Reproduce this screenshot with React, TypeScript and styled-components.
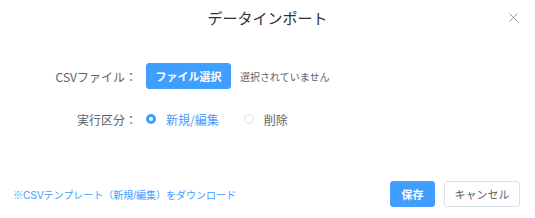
import styled, { createGlobalStyle } from 'styled-components';

const GlobalStyle = createGlobalStyle`
  html, body {
    margin: 0;
    padding: 0;
    background: #ffffff;
  }
  body {
    font-family: "Helvetica Neue", "Liberation Sans", "Noto Sans CJK JP", sans-serif;
    color: #606266;
  }
`;

const Dialog = styled.div`
  width: 535px;
  height: 218px;
  box-sizing: border-box;
  display: flex;
  flex-direction: column;
  background: #fff;
`;

const Header = styled.div`
  position: relative;
  height: 36px;
  display: flex;
  align-items: center;
  justify-content: center;
`;

const Title = styled.div`
  font-family: "Noto Sans CJK JP", sans-serif;
  font-size: 15px;
  line-height: 20px;
  color: #303133;
`;

const CloseButton = styled.button`
  position: absolute;
  right: 17px;
  top: 12px;
  width: 10px;
  height: 10px;
  padding: 0;
  border: none;
  background: none;
  cursor: pointer;
  display: flex;
  align-items: center;
  justify-content: center;
`;

const Body = styled.div`
  padding-top: 27px;
  display: flex;
  flex-direction: column;
  gap: 17px;
`;

const Row = styled.div`
  display: flex;
  align-items: center;
  height: 26px;
`;

const Label = styled.div`
  width: 146px;
  text-align: right;
  padding-right: 9px;
  box-sizing: border-box;
  font-family: "Noto Sans CJK JP", sans-serif;
  font-size: 12px;
  color: #606266;
`;

const Button = styled.button<{ $primary?: boolean; $width: number }>`
  width: ${p => p.$width}px;
  height: 26px;
  border-radius: 3px;
  box-sizing: border-box;
  font-family: "Noto Sans CJK JP", sans-serif;
  font-size: 11px;
  font-weight: ${p => (p.$primary ? 700 : 400)};
  cursor: pointer;
  padding: 0;
  border: 1px solid ${p => (p.$primary ? '#409eff' : '#dcdfe6')};
  background: ${p => (p.$primary ? '#409eff' : '#fff')};
  color: ${p => (p.$primary ? '#fff' : '#606266')};
`;

const Hint = styled.span`
  margin-left: 9px;
  font-family: "Noto Sans CJK JP", sans-serif;
  font-size: 10px;
  color: #606266;
`;

const RadioGroup = styled.div`
  display: flex;
  align-items: center;
  gap: 25px;
`;

const RadioItem = styled.label<{ $checked?: boolean }>`
  display: flex;
  align-items: center;
  gap: 10px;
  font-family: "Noto Sans CJK JP", sans-serif;
  font-size: 12px;
  color: ${p => (p.$checked ? '#409eff' : '#606266')};
  cursor: pointer;
`;

const RadioDot = styled.span<{ $checked?: boolean }>`
  width: 10px;
  height: 10px;
  border-radius: 50%;
  box-sizing: border-box;
  border: ${p => (p.$checked ? '3px solid #409eff' : '1px solid #dcdfe6')};
  background: #fff;
`;

const Footer = styled.div`
  margin-top: auto;
  height: 38px;
  padding: 0 15px 5px 13px;
  display: flex;
  align-items: center;
  justify-content: space-between;
`;

const DownloadLink = styled.a`
  font-family: "Helvetica Neue", "Liberation Sans", "Noto Sans CJK JP", sans-serif;
  font-size: 10px;
  color: #409eff;
  text-decoration: none;
  cursor: pointer;
`;

const Actions = styled.div`
  display: flex;
  gap: 9px;
`;

export default function App() {
  return (
    <>
      <GlobalStyle />
      <Dialog>
        <Header>
          <Title>データインポート</Title>
          <CloseButton aria-label="close">
            <svg width="9" height="9" viewBox="0 0 9 9">
              <path d="M0.5 0.5 L8.5 8.5 M8.5 0.5 L0.5 8.5" stroke="#909399" strokeWidth="1" fill="none" />
            </svg>
          </CloseButton>
        </Header>
        <Body>
          <Row>
            <Label>CSVファイル：</Label>
            <Button $primary $width={85}>ファイル選択</Button>
            <Hint>選択されていません</Hint>
          </Row>
          <Row>
            <Label>実行区分：</Label>
            <RadioGroup>
              <RadioItem $checked>
                <RadioDot $checked />
                新規/編集
              </RadioItem>
              <RadioItem>
                <RadioDot />
                削除
              </RadioItem>
            </RadioGroup>
          </Row>
        </Body>
        <Footer>
          <DownloadLink>※CSVテンプレート（新規/編集）をダウンロード</DownloadLink>
          <Actions>
            <Button $primary $width={45}>保存</Button>
            <Button $width={76}>キャンセル</Button>
          </Actions>
        </Footer>
      </Dialog>
    </>
  );
}
